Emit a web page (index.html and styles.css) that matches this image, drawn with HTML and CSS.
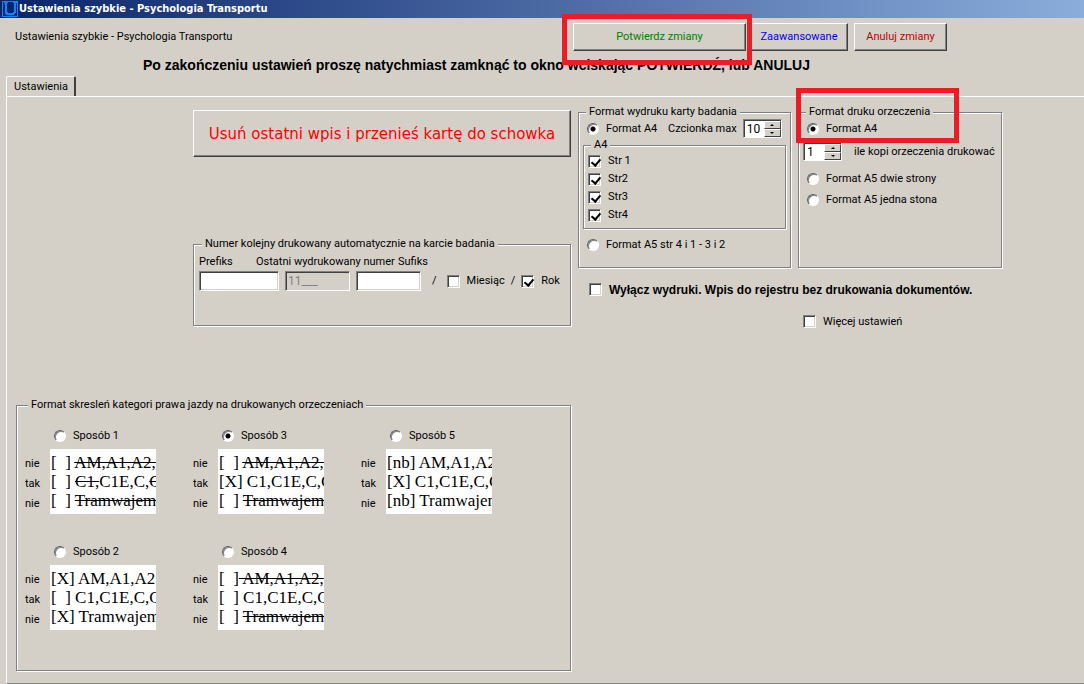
FILE: index.html
```
<!DOCTYPE html>
<html lang="pl">
<head>
	<meta charset="utf-8">
	<title>Ustawienia szybkie - Psychologia Transportu</title>
	<link rel="stylesheet" href="styles.css">
</head>
<body>
	<div class="titlebar">
		<svg class="logo" width="16" height="16" viewBox="0 0 16 16" shape-rendering="crispEdges">
			<rect width="16" height="16" fill="#0a84ff"/>
			<path d="M1 1h14v14H1z" fill="#0a246a"/>
			<path d="M2 1h4v1H5v9h1v1h5v-1h1V2h-1V1h4v1h-1v10h-1v1h-1v1H4v-1H3V2H2z" fill="#0a84ff"/>
		</svg>
		<span>Ustawienia szybkie - Psychologia Transportu</span>
	</div>

	<header class="header">
		<span class="caption">Ustawienia szybkie - Psychologia Transportu</span>
		<div class="actions">
			<div class="marked">
				<button type="button" class="btn btn-confirm">Potwierdz zmiany</button>
				<div class="marker marker-confirm"></div>
			</div>
			<button type="button" class="btn btn-advanced">Zaawansowane</button>
			<button type="button" class="btn btn-cancel">Anuluj zmiany</button>
		</div>
	</header>
	<h1 class="notice">Po zakończeniu ustawień proszę natychmiast zamknąć to okno wciskając POTWIERDŹ, lub ANULUJ</h1>

	<div class="tabs">
		<button type="button" class="tab">Ustawienia</button>
	</div>
	<main class="panel">
		<div class="left">
			<button type="button" class="btn btn-remove">Usuń ostatni wpis i przenieś kartę do schowka</button>

			<fieldset class="group number">
				<legend>Numer kolejny drukowany automatycznie na karcie badania</legend>
				<div class="number-labels">
					<label class="label-prefix" for="prefix">Prefiks</label>
					<label class="label-last" for="last">Ostatni wydrukowany numer</label>
					<label for="suffix">Sufiks</label>
				</div>
				<div class="number-fields">
					<input type="text" class="field field-prefix" id="prefix">
					<input type="text" class="field" id="last" value="11___" disabled>
					<input type="text" class="field" id="suffix">
					<span class="slash">/</span>
					<label class="option"><input type="checkbox" class="check">Miesiąc</label>
					<span>/</span>
					<label class="option"><input type="checkbox" class="check" checked>Rok</label>
				</div>
			</fieldset>

			<fieldset class="group strike">
				<legend>Format skresleń kategori prawa jazdy na drukowanych orzeczeniach</legend>
				<div class="samples">
					<div class="sample">
						<label class="option"><input type="radio" class="radio" name="sposob">Sposób 1</label>
						<div class="sample-body">
							<div class="answers"><span>nie</span><span>tak</span><span>nie</span></div>
							<div class="preview">
								<div>[  ] <s>AM,A1,A2,</s></div>
								<div>[  ] <s>C1,</s>C1E,C,<s>C</s></div>
								<div>[  ] <s>Tramwajem</s></div>
							</div>
						</div>
					</div>
					<div class="sample">
						<label class="option"><input type="radio" class="radio" name="sposob" checked>Sposób 3</label>
						<div class="sample-body">
							<div class="answers"><span>nie</span><span>tak</span><span>nie</span></div>
							<div class="preview">
								<div>[  ] <s>AM,A1,A2,</s></div>
								<div>[X] C1,C1E,C,C</div>
								<div>[  ] <s>Tramwajem</s></div>
							</div>
						</div>
					</div>
					<div class="sample">
						<label class="option"><input type="radio" class="radio" name="sposob">Sposób 5</label>
						<div class="sample-body">
							<div class="answers"><span>nie</span><span>tak</span><span>nie</span></div>
							<div class="preview">
								<div>[nb] AM,A1,A2</div>
								<div>[X] C1,C1E,C,C</div>
								<div>[nb] Tramwajem</div>
							</div>
						</div>
					</div>
					<div class="sample">
						<label class="option"><input type="radio" class="radio" name="sposob">Sposób 2</label>
						<div class="sample-body">
							<div class="answers"><span>nie</span><span>tak</span><span>nie</span></div>
							<div class="preview">
								<div>[X] AM,A1,A2</div>
								<div>[  ] C1,C1E,C,C</div>
								<div>[X] Tramwajem</div>
							</div>
						</div>
					</div>
					<div class="sample">
						<label class="option"><input type="radio" class="radio" name="sposob">Sposób 4</label>
						<div class="sample-body">
							<div class="answers"><span>nie</span><span>tak</span><span>nie</span></div>
							<div class="preview">
								<div>[  ]<s> AM,A1,A2,</s></div>
								<div>[  ] C1,C1E,C,C</div>
								<div>[  ] <s>Tramwajem</s></div>
							</div>
						</div>
					</div>
				</div>
			</fieldset>
		</div>

		<div class="right">
			<div class="formats">
				<fieldset class="group card">
					<legend>Format wydruku karty badania</legend>
					<div class="row">
						<label class="option option-a4"><input type="radio" class="radio" name="karta" checked>Format A4</label>
						<label for="font-max">Czcionka max</label>
						<div class="spin">
							<input type="text" class="spin-value" id="font-max" value="10">
							<div class="spin-buttons">
								<button type="button" class="spin-up" aria-label="Więcej"></button>
								<button type="button" class="spin-down" aria-label="Mniej"></button>
							</div>
						</div>
					</div>
					<fieldset class="group pages">
						<legend>A4</legend>
						<label class="option"><input type="checkbox" class="check" checked>Str 1</label>
						<label class="option"><input type="checkbox" class="check" checked>Str2</label>
						<label class="option"><input type="checkbox" class="check" checked>Str3</label>
						<label class="option"><input type="checkbox" class="check" checked>Str4</label>
					</fieldset>
					<label class="option"><input type="radio" class="radio" name="karta">Format A5 str 4 i 1 - 3 i 2</label>
				</fieldset>

				<fieldset class="group decision">
					<legend>Format druku orzeczenia</legend>
					<label class="option"><input type="radio" class="radio" name="orzeczenie" checked>Format A4</label>
					<div class="row copies">
						<div class="spin">
							<input type="text" class="spin-value" id="copies" value="1">
							<div class="spin-buttons">
								<button type="button" class="spin-up" aria-label="Więcej"></button>
								<button type="button" class="spin-down" aria-label="Mniej"></button>
							</div>
						</div>
						<label for="copies">ile kopi orzeczenia drukować</label>
					</div>
					<label class="option"><input type="radio" class="radio" name="orzeczenie">Format A5 dwie strony</label>
					<label class="option"><input type="radio" class="radio" name="orzeczenie">Format A5 jedna stona</label>
					<div class="marker marker-decision"></div>
				</fieldset>
			</div>
			<label class="option no-print"><input type="checkbox" class="check">Wyłącz wydruki. Wpis do rejestru bez drukowania dokumentów.</label>
			<label class="option more"><input type="checkbox" class="check">Więcej ustawień</label>
		</div>
	</main>
</body>
</html>
```
FILE: styles.css
```
* {
	box-sizing: border-box;
}

body {
	display: flex;
	flex-direction: column;
	min-height: 100vh;
	margin: 0;
	background: #d4d0c8;
	color: #000;
	font: 11px/14px Roboto, "Liberation Sans", Arial, sans-serif;
	white-space: nowrap;
}

button,
input {
	margin: 0;
	padding: 0;
	font: inherit;
}

/* title bar */
.titlebar {
	display: flex;
	align-items: center;
	gap: 1px;
	height: 18px;
	padding-left: 2px;
	background: linear-gradient(to right, #0a246a, #8aaddb);
	color: #fff;
	font: bold 11px/14px "DejaVu Sans Condensed", "DejaVu Sans", sans-serif;
}

.logo {
	flex: none;
}

/* top buttons */
.header {
	display: flex;
	align-items: center;
	justify-content: space-between;
	padding: 5px 137px 0 15px;
}

.actions {
	display: flex;
}

.btn {
	height: 28px;
	border: 1px solid;
	border-color: #fff #404040 #404040 #fff;
	box-shadow: inset -1px -1px 0 #808080;
	background: #d4d0c8;
}

.marked {
	position: relative;
	margin-right: 4px;
}

.btn-confirm {
	width: 173px;
	color: #008000;
}

.btn-advanced {
	width: 98px;
	margin-right: 6px;
	color: #00f;
}

.btn-cancel {
	width: 93px;
	color: #c00000;
}

.marker {
	position: absolute;
	border: 5px solid #ed1c24;
	pointer-events: none;
}

.marker-confirm {
	top: -9px;
	left: -11px;
	width: 190px;
	height: 51px;
}

.notice {
	margin: 6px 0 3px;
	padding-left: 143px;
	font: bold 14px/16px "Liberation Sans", Arial, sans-serif;
}

/* tabs */
.tabs {
	display: flex;
	padding-left: 6px;
}

.tab {
	height: 20px;
	padding: 0 6px 0 7px;
	border: solid;
	border-width: 1px 2px 0 1px;
	border-color: #fff #404040 #fff #fff;
	border-radius: 2px 2px 0 0;
	background: #d4d0c8;
}

.panel {
	display: flex;
	flex: 1;
	gap: 7px;
	margin-left: 6px;
	padding: 8px 9px 12px;
	border: solid;
	border-width: 1px 0 1px 1px;
	border-color: #fff #808080 #808080 #fff;
}

/* groups */
.group {
	min-width: 0;
	margin: 0;
	padding: 0 4px;
	border: 1px solid #808080;
	box-shadow: 1px 1px 0 #fff, inset 1px 1px 0 #fff;
}

.group legend {
	margin-left: 3px;
	padding: 0 3px;
	background: #d4d0c8;
}

.option {
	display: flex;
	align-items: center;
	height: 19px;
}

.row {
	display: flex;
	align-items: center;
	height: 19px;
}

.radio {
	flex: none;
	width: 12px;
	height: 12px;
	margin: 0 7px 0 4px;
	appearance: none;
	border: 1px solid;
	border-color: #606060 #fff #fff #606060;
	border-radius: 50%;
	box-shadow: inset 1px 1px 0 #808080;
	background: #fff;
}

.radio:checked {
	background: radial-gradient(circle, #000 2px, #fff 3px);
}

.check {
	flex: none;
	width: 13px;
	height: 13px;
	margin: 0 7px 0 0;
	appearance: none;
	border: 1px solid;
	border-color: #808080 #fff #fff #808080;
	box-shadow: inset 1px 1px 0 #404040, inset -1px -1px 0 #d4d0c8;
	background: #fff;
}

.check:checked::after {
	content: "";
	display: block;
	width: 4px;
	height: 7px;
	margin: 1px 0 0 4px;
	border: solid #000;
	border-width: 0 2px 2px 0;
	transform: rotate(40deg);
}

.field {
	width: 65px;
	height: 20px;
	padding: 0 2px;
	border: 1px solid;
	border-color: #808080 #fff #fff #808080;
	box-shadow: inset 1px 1px 0 #404040, inset -1px -1px 0 #d4d0c8;
	background: #fff;
	font-size: 12px;
}

.field:disabled {
	background: #d4d0c8;
	color: #808080;
}

/* left column */
.left {
	display: flex;
	flex: none;
	flex-direction: column;
	width: 555px;
	padding-top: 5px;
}

.btn-remove {
	align-self: flex-end;
	width: 378px;
	height: 47px;
	color: #f00;
	font: 15px/20px "DejaVu Sans", Verdana, sans-serif;
}

.number {
	align-self: flex-end;
	width: 378px;
	margin-top: 80px;
	padding: 4px 5px 34px;
}

.number-labels {
	display: flex;
	margin-bottom: 2px;
}

.label-prefix {
	width: 57px;
}

.label-last {
	width: 142px;
}

.number-fields {
	display: flex;
	align-items: center;
	gap: 6px;
}

.field-prefix {
	width: 80px;
}

.slash {
	padding: 0 4px 0 5px;
}

.strike {
	margin-top: 72px;
	padding: 14px 8px 40px;
}

.samples {
	display: grid;
	grid-template-columns: repeat(3, 168px);
	row-gap: 28px;
}

.sample .option {
	padding-left: 25px;
}

.sample-body {
	display: flex;
	margin-top: 4px;
}

.answers {
	display: flex;
	flex-direction: column;
	width: 25px;
	padding-top: 5px;
	line-height: 20px;
}

.preview {
	width: 106px;
	height: 65px;
	padding: 4px 0 0 1px;
	overflow: hidden;
	background: #fff;
	font: 17px/19px "Liberation Serif", "Times New Roman", serif;
}

.preview div {
	white-space: pre;
}

/* right column */
.right {
	flex: 1;
}

.formats {
	display: flex;
	gap: 7px;
}

.card {
	width: 213px;
	padding-bottom: 13px;
}

.option-a4 {
	width: 85px;
}

.card .spin {
	margin-left: 6px;
}

.pages {
	margin-bottom: 6px;
	padding-bottom: 4px;
}

.pages .option {
	height: 18px;
}

.decision {
	position: relative;
	width: 204px;
}

.copies {
	gap: 12px;
	margin: 4px 0 8px;
}

.decision .option {
	margin-bottom: 2px;
}

.marker-decision {
	top: -31px;
	left: -3px;
	width: 163px;
	height: 55px;
}

.spin {
	display: flex;
	width: 39px;
	height: 19px;
	border: 1px solid;
	border-color: #808080 #fff #fff #808080;
	box-shadow: inset 1px 1px 0 #404040;
	background: #fff;
}

.spin-value {
	width: 20px;
	padding-left: 3px;
	border: 0;
	background: transparent;
	font-size: 12px;
}

.spin-buttons {
	display: flex;
	flex: 1;
	flex-direction: column;
	padding-top: 1px;
}

.spin-up,
.spin-down {
	display: flex;
	flex: 1;
	align-items: center;
	justify-content: center;
	border: 1px solid;
	border-color: #fff #404040 #404040 #fff;
	background: #d4d0c8;
}

.spin-up::before,
.spin-down::before {
	content: "";
	border: solid transparent;
	border-width: 0 2px 2px;
	border-bottom-color: #000;
}

.spin-down::before {
	border-width: 2px 2px 0;
	border-top-color: #000;
}

.no-print {
	margin: 12px 0 0 11px;
	font: bold 12px/14px "Liberation Sans", Arial, sans-serif;
}

.more {
	margin: 13px 0 0 225px;
}
```
